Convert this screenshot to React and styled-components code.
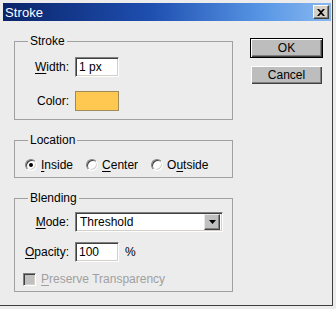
import React from "react";
import styled, { createGlobalStyle } from "styled-components";

const Global = createGlobalStyle`
  html, body { margin: 0; padding: 0; background: #ececec; }
  body { font-family: "Liberation Sans", Arial, sans-serif; font-size: 12px; color: #000; }
  * { box-sizing: border-box; }
`;

const Window = styled.div`
  width: 333px;
  height: 306px;
  background: #ececec;
  border-right: 1px solid #404040;
  border-bottom: 1px solid #404040;
  padding: 3px 1px 0 3px;
  display: flex;
  flex-direction: column;
`;

const TitleBar = styled.div`
  height: 18px;
  background: linear-gradient(to right, #0a246a 0%, #1e4fb0 45%, #5a98e6 80%, #8ab8f0 100%);
  display: flex;
  align-items: center;
  justify-content: space-between;
  padding: 0 2px 0 2px;
`;

const Title = styled.span`
  color: #fff;
  font-size: 13px;
  line-height: 15px;
  letter-spacing: 0.1px;
`;

const CloseBtn = styled.div`
  width: 16px;
  height: 14px;
  background: #d4d0c8;
  border-top: 1px solid #fff;
  border-left: 1px solid #fff;
  border-right: 1px solid #404040;
  border-bottom: 1px solid #404040;
  box-shadow: inset -1px -1px 0 #808080;
  display: flex;
  align-items: center;
  justify-content: center;
`;

const Body = styled.div`
  display: flex;
  padding: 13px 0 0 11px;
`;

const LeftCol = styled.div`
  width: 219px;
  display: flex;
  flex-direction: column;
  gap: 13px;
`;

const Group = styled.fieldset`
  margin: 0;
  padding: 0;
  min-width: 0;
  border: 1px solid #a0a0a0;
`;

const Legend = styled.legend`
  margin-left: 13px;
  padding: 0 2px;
  line-height: 14px;
  font-size: 12px;
`;

const FormGrid = styled.div`
  display: grid;
  grid-template-columns: 54px auto;
  column-gap: 6px;
  row-gap: ${(p) => p.$gap}px;
  align-items: center;
  justify-items: start;
  padding: ${(p) => p.$pad};
`;

const Label = styled.span`
  justify-self: end;
  line-height: 14px;
  white-space: nowrap;
`;

const Mn = styled.u`
  text-decoration: underline;
  text-underline-offset: 2px;
`;

const TextBox = styled.div`
  width: ${(p) => p.$w}px;
  height: 20px;
  background: #fff;
  border-top: 1px solid #808080;
  border-left: 1px solid #808080;
  border-right: 1px solid #fff;
  border-bottom: 1px solid #fff;
  box-shadow: inset 1px 1px 0 #404040, inset -1px -1px 0 #d4d0c8;
  display: flex;
  align-items: center;
  padding-left: 3px;
  line-height: 14px;
`;

const Swatch = styled.div`
  width: 44px;
  height: 20px;
  background: #ffc850;
  border: 1px solid #a08a5a;
`;

const Inline = styled.div`
  display: flex;
  align-items: center;
  gap: 6px;
`;

const Select = styled(TextBox)`
  justify-content: space-between;
  padding: 0 2px 0 4px;
`;

const DropBtn = styled.div`
  width: 16px;
  height: 16px;
  background: #c0c0c0;
  border-top: 1px solid #e8e8e8;
  border-left: 1px solid #e8e8e8;
  border-right: 1px solid #404040;
  border-bottom: 1px solid #404040;
  box-shadow: inset -1px -1px 0 #808080;
  display: flex;
  align-items: center;
  justify-content: center;
`;

const RadioRow = styled.div`
  display: flex;
  align-items: center;
  gap: 13px;
  padding: 11px 0 5px 10px;
`;

const Option = styled.label`
  display: flex;
  align-items: center;
  gap: 4px;
  line-height: 14px;
`;

const Radio = styled.span`
  width: 12px;
  height: 12px;
  border-radius: 50%;
  border-top: 1px solid #808080;
  border-left: 1px solid #808080;
  border-right: 1px solid #fff;
  border-bottom: 1px solid #fff;
  box-shadow: inset 1px 1px 0 #404040, inset -1px -1px 0 #d4d0c8;
  background: #fff;
  display: flex;
  align-items: center;
  justify-content: center;
  &::after {
    content: "";
    width: 4px;
    height: 4px;
    border-radius: 50%;
    background: ${(p) => (p.$checked ? "#000" : "transparent")};
  }
`;

const CheckRow = styled.div`
  grid-column: 1 / span 2;
  justify-self: start;
  display: flex;
  align-items: center;
  gap: 5px;
  margin-left: 8px;
  color: #a0a0a0;
  line-height: 14px;
`;

const CheckBox = styled.span`
  width: 13px;
  height: 13px;
  background: #c0c0c0;
  border-top: 1px solid #808080;
  border-left: 1px solid #808080;
  border-right: 1px solid #fff;
  border-bottom: 1px solid #fff;
  box-shadow: inset 1px 1px 0 #404040, inset -1px -1px 0 #d4d0c8;
`;

const RightCol = styled.div`
  margin-left: 17px;
  padding-top: 4px;
  display: flex;
  flex-direction: column;
  gap: 8px;
`;

const Button = styled.div`
  width: ${(p) => (p.$default ? 73 : 71)}px;
  height: ${(p) => (p.$default ? 20 : 18)}px;
  margin-left: ${(p) => (p.$default ? 0 : 1)}px;
  background: #bdbdbd;
  border: ${(p) => (p.$default ? "1px solid #000" : "none")};
  display: flex;
  align-items: center;
  justify-content: center;
  line-height: 14px;
  box-shadow: inset 1px 1px 0 #fff, inset -1px -1px 0 #404040, inset -2px -2px 0 #808080;
`;

export default function App() {
  return (
    <>
      <Global />
      <Window>
        <TitleBar>
          <Title>Stroke</Title>
          <CloseBtn>
            <svg width="8" height="7" viewBox="0 0 8 7">
              <path d="M0 0h2l2 2 2-2h2L5 3.5 8 7H6L4 5 2 7H0l3-3.5z" fill="#000" />
            </svg>
          </CloseBtn>
        </TitleBar>
        <Body>
          <LeftCol>
            <Group>
              <Legend>Stroke</Legend>
              <FormGrid $gap={14} $pad="9px 0 8px 0">
                <Label>
                  <Mn>W</Mn>idth:
                </Label>
                <TextBox $w={44}>1 px</TextBox>
                <Label>Color:</Label>
                <Swatch />
              </FormGrid>
            </Group>
            <Group>
              <Legend>Location</Legend>
              <RadioRow>
                <Option>
                  <Radio $checked />
                  <span>
                    <Mn>I</Mn>nside
                  </span>
                </Option>
                <Option>
                  <Radio />
                  <span>
                    <Mn>C</Mn>enter
                  </span>
                </Option>
                <Option>
                  <Radio />
                  <span>
                    O<Mn>u</Mn>tside
                  </span>
                </Option>
              </RadioRow>
            </Group>
            <Group>
              <Legend>Blending</Legend>
              <FormGrid $gap={10} $pad="7px 0 5px 0">
                <Label>
                  <Mn>M</Mn>ode:
                </Label>
                <Select $w={148}>
                  <span>Threshold</span>
                  <DropBtn>
                    <svg width="7" height="4" viewBox="0 0 7 4">
                      <path d="M0 0h7L3.5 4z" fill="#000" />
                    </svg>
                  </DropBtn>
                </Select>
                <Label>
                  <Mn>O</Mn>pacity:
                </Label>
                <Inline>
                  <TextBox $w={44}>100</TextBox>
                  <span>%</span>
                </Inline>
                <CheckRow>
                  <CheckBox />
                  <span>
                    <Mn>P</Mn>reserve Transparency
                  </span>
                </CheckRow>
              </FormGrid>
            </Group>
          </LeftCol>
          <RightCol>
            <Button $default>OK</Button>
            <Button>Cancel</Button>
          </RightCol>
        </Body>
      </Window>
    </>
  );
}
